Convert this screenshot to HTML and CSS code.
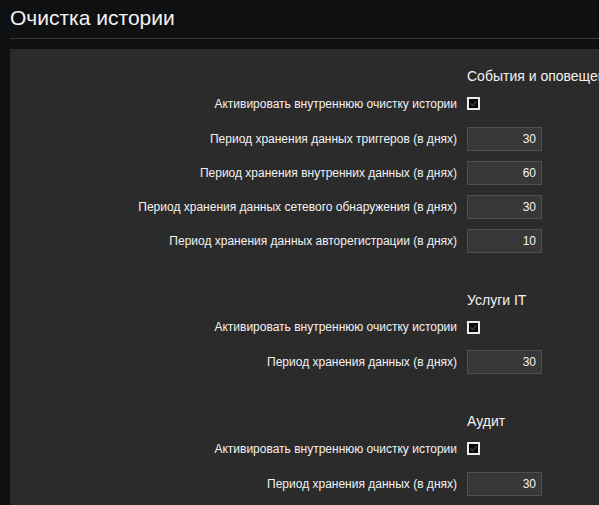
FILE: index.html
```html
<!DOCTYPE html>
<html lang="ru">
<head>
<meta charset="utf-8">
<title>Очистка истории</title>
<link rel="stylesheet" href="styles.css">
</head>
<body>
<div class="page">
  <header class="page-header">
    <h1 class="page-title">Очистка истории</h1>
  </header>

  <main class="panel">
    <section class="group">
      <div class="row head"><span></span><span class="group-title">События и оповещения</span></div>
      <div class="row check-row">
        <label class="label">Активировать внутреннюю очистку истории</label>
        <span class="checkbox"><svg viewBox="0 0 9 9" width="9" height="9"><path d="M1.5 4.5 L3.7 6.8 L7.6 2" fill="none" stroke="#3a3a3a" stroke-width="1.6"/></svg></span>
      </div>
      <div class="row">
        <label class="label">Период хранения данных триггеров (в днях)</label>
        <input class="field" type="text" value="30">
      </div>
      <div class="row">
        <label class="label">Период хранения внутренних данных (в днях)</label>
        <input class="field" type="text" value="60">
      </div>
      <div class="row">
        <label class="label">Период хранения данных сетевого обнаружения (в днях)</label>
        <input class="field" type="text" value="30">
      </div>
      <div class="row">
        <label class="label">Период хранения данных авторегистрации (в днях)</label>
        <input class="field" type="text" value="10">
      </div>
    </section>

    <section class="group">
      <div class="row head"><span></span><span class="group-title">Услуги IT</span></div>
      <div class="row check-row">
        <label class="label">Активировать внутреннюю очистку истории</label>
        <span class="checkbox"><svg viewBox="0 0 9 9" width="9" height="9"><path d="M1.5 4.5 L3.7 6.8 L7.6 2" fill="none" stroke="#3a3a3a" stroke-width="1.6"/></svg></span>
      </div>
      <div class="row">
        <label class="label">Период хранения данных (в днях)</label>
        <input class="field" type="text" value="30">
      </div>
    </section>

    <section class="group">
      <div class="row head"><span></span><span class="group-title">Аудит</span></div>
      <div class="row check-row">
        <label class="label">Активировать внутреннюю очистку истории</label>
        <span class="checkbox"><svg viewBox="0 0 9 9" width="9" height="9"><path d="M1.5 4.5 L3.7 6.8 L7.6 2" fill="none" stroke="#3a3a3a" stroke-width="1.6"/></svg></span>
      </div>
      <div class="row">
        <label class="label">Период хранения данных (в днях)</label>
        <input class="field" type="text" value="30">
      </div>
    </section>
  </main>
</div>
</body>
</html>
```

FILE: styles.css
```css
html, body {
  margin: 0;
  height: 100%;
}

body {
  background: #0e1012;
  color: #f2f2f2;
  font-family: "Liberation Sans", Arial, sans-serif;
  font-size: 12px;
  overflow: hidden;
}

.page {
  padding-left: 10px;
  min-height: 100%;
  display: flex;
  flex-direction: column;
}

.page-header {
  padding-top: 6px;
  padding-bottom: 8px;
  border-bottom: 1px solid #383838;
}

.page-title {
  margin: 0;
  font-size: 21px;
  font-weight: normal;
  line-height: 24px;
  color: #f2f2f2;
}

.panel {
  margin-top: 10px;
  flex: 1;
  background: #2b2b2b;
  padding-top: 18px;
}

.group + .group {
  margin-top: 38px;
}

.row {
  display: grid;
  grid-template-columns: 447px 1fr;
  column-gap: 10px;
  align-items: center;
  height: 24px;
  margin-bottom: 10px;
  white-space: nowrap;
}

.row:last-child {
  margin-bottom: 0;
}

.row.head {
  height: 18px;
  margin-bottom: 6.5px;
}

.row.check-row {
  margin-bottom: 11px;
}

.group-title {
  font-size: 14px;
  line-height: 18px;
}

.label {
  text-align: right;
  line-height: 14px;
}

.checkbox {
  box-sizing: border-box;
  width: 13px;
  height: 13px;
  border: 2px solid #ececec;
  background: #050505;
  display: flex;
  align-items: center;
  justify-content: center;
}

.checkbox svg {
  display: block;
}

.field {
  box-sizing: border-box;
  width: 75px;
  height: 24px;
  margin: 0;
  padding: 0 5px;
  background: #383838;
  border: 1px solid #4f4f4f;
  color: #f2f2f2;
  font-family: inherit;
  font-size: 12px;
  text-align: right;
  outline: none;
}
```
